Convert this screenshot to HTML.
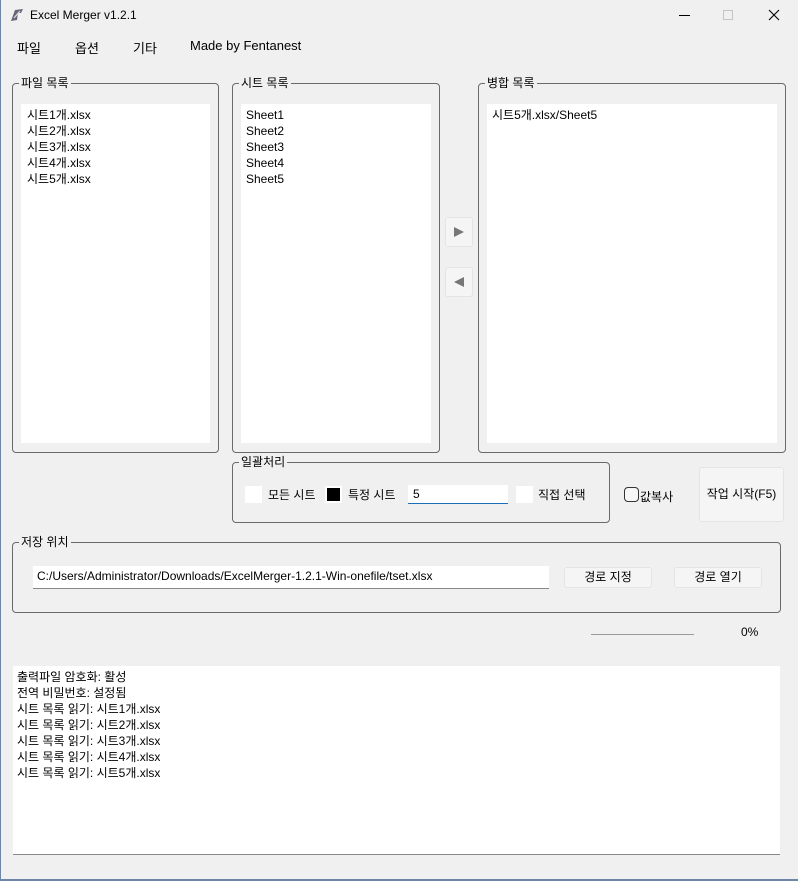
<!DOCTYPE html>
<html><head><meta charset="utf-8"><style>
*{margin:0;padding:0;box-sizing:border-box}
body{width:798px;height:881px;background:#f0f0f0;font-family:"Liberation Sans","Noto Sans CJK KR",sans-serif;font-size:12px;color:#000;position:relative;overflow:hidden}
.a{position:absolute}
.g{position:absolute;border:1px solid #6a6a6a;border-radius:4px}
.gl{position:absolute;background:#f0f0f0;padding:0 2px;font-size:12px;line-height:14px;top:-8px;left:6px}
.w{position:absolute;background:#fff}
.ln{line-height:16px;white-space:nowrap}
.btn{position:absolute;background:#f5f5f5;border:1px solid #e4e4e4;border-radius:3px;text-align:center}
.cb{position:absolute;width:17px;height:17px;background:#fff}
</style></head><body>
<div class="a" style="left:0;top:0;width:798px;height:31px;background:#f0f0f0"></div>
<div class="a" style="left:0;top:0;width:1px;height:881px;background:#6c86a8"></div>
<div class="a" style="left:0;top:879px;width:798px;height:2px;background:#6c86a8"></div>
<svg class="a" style="left:9px;top:7px" width="16" height="16"><path d="M2 14 L6 3 L14 2 L12 6 L9 6 L8 13 Z" fill="#667" /><path d="M5 11 L11 4" stroke="#ddd" stroke-width="1.2"/></svg>
<div class="a" style="left:30px;top:8px;font-size:12px">Excel Merger v1.2.1</div>
<div class="a" style="left:679px;top:15px;width:11px;height:1px;background:#000"></div>
<div class="a" style="left:723px;top:10px;width:10px;height:10px;border:1px solid #c4c4c4"></div>
<svg class="a" style="left:768px;top:9px" width="12" height="12"><path d="M1 1L11 11M11 1L1 11" stroke="#000" stroke-width="1.1"/></svg>
<div class="a" style="left:17px;top:38px;font-size:13px">파일</div>
<div class="a" style="left:75px;top:38px;font-size:13px">옵션</div>
<div class="a" style="left:133px;top:38px;font-size:13px">기타</div>
<div class="a" style="left:190px;top:38px;font-size:13px">Made by Fentanest</div>

<div class="g" style="left:12px;top:83px;width:207px;height:370px"><div class="gl">파일 목록</div></div>
<div class="w" style="left:21px;top:104px;width:189px;height:339px;padding:3px 6px"><div class="ln">시트1개.xlsx<br>시트2개.xlsx<br>시트3개.xlsx<br>시트4개.xlsx<br>시트5개.xlsx</div></div>
<div class="g" style="left:232px;top:83px;width:208px;height:370px"><div class="gl">시트 목록</div></div>
<div class="w" style="left:241px;top:104px;width:190px;height:339px;padding:3px 5px"><div class="ln">Sheet1<br>Sheet2<br>Sheet3<br>Sheet4<br>Sheet5</div></div>
<div class="btn" style="left:445px;top:217px;width:28px;height:30px"></div>
<svg class="a" style="left:453px;top:226px" width="12" height="12"><path d="M1 1L11 6L1 11Z" fill="#777"/></svg>
<div class="btn" style="left:445px;top:267px;width:28px;height:30px"></div>
<svg class="a" style="left:453px;top:276px" width="12" height="12"><path d="M11 1L1 6L11 11Z" fill="#777"/></svg>
<div class="g" style="left:478px;top:83px;width:308px;height:370px"><div class="gl">병합 목록</div></div>
<div class="w" style="left:487px;top:104px;width:290px;height:339px;padding:3px 5px"><div class="ln">시트5개.xlsx/Sheet5</div></div>

<div class="g" style="left:232px;top:462px;width:378px;height:61px"><div class="gl">일괄처리</div></div>
<div class="cb" style="left:245px;top:486px"></div>
<div class="a" style="left:268px;top:486px">모든 시트</div>
<div class="cb" style="left:325px;top:486px;background:#fff"><div style="margin:2px;width:13px;height:13px;background:#000"></div></div>
<div class="a" style="left:348px;top:486px">특정 시트</div>
<div class="w" style="left:408px;top:485px;width:100px;height:19px;border-bottom:1px solid #1a6fb8;padding:2px 5px">5</div>
<div class="cb" style="left:516px;top:486px"></div>
<div class="a" style="left:538px;top:486px">직접 선택</div>
<div class="a" style="left:624px;top:487px;width:15px;height:15px;border:1px solid #333;border-radius:4px;background:#f7f7f7"></div>
<div class="a" style="left:640px;top:488px">값복사</div>
<div class="btn" style="left:699px;top:467px;width:85px;height:55px;line-height:53px">작업 시작(F5)</div>

<div class="g" style="left:12px;top:542px;width:769px;height:71px"><div class="gl">저장 위치</div></div>
<div class="w" style="left:33px;top:566px;width:516px;height:23px;border-bottom:1px solid #888;padding:3px 4px">C:/Users/Administrator/Downloads/ExcelMerger-1.2.1-Win-onefile/tset.xlsx</div>
<div class="btn" style="left:564px;top:567px;width:88px;height:21px;line-height:19px">경로 지정</div>
<div class="btn" style="left:674px;top:567px;width:88px;height:21px;line-height:19px">경로 열기</div>
<div class="a" style="left:591px;top:634px;width:103px;height:1px;background:#999"></div>
<div class="a" style="left:741px;top:625px">0%</div>

<div class="w" style="left:13px;top:666px;width:767px;height:189px;border-bottom:1px solid #888;padding:3px 4px"><div class="ln">출력파일 암호화: 활성<br>전역 비밀번호: 설정됨<br>시트 목록 읽기: 시트1개.xlsx<br>시트 목록 읽기: 시트2개.xlsx<br>시트 목록 읽기: 시트3개.xlsx<br>시트 목록 읽기: 시트4개.xlsx<br>시트 목록 읽기: 시트5개.xlsx</div></div>
</body></html>
